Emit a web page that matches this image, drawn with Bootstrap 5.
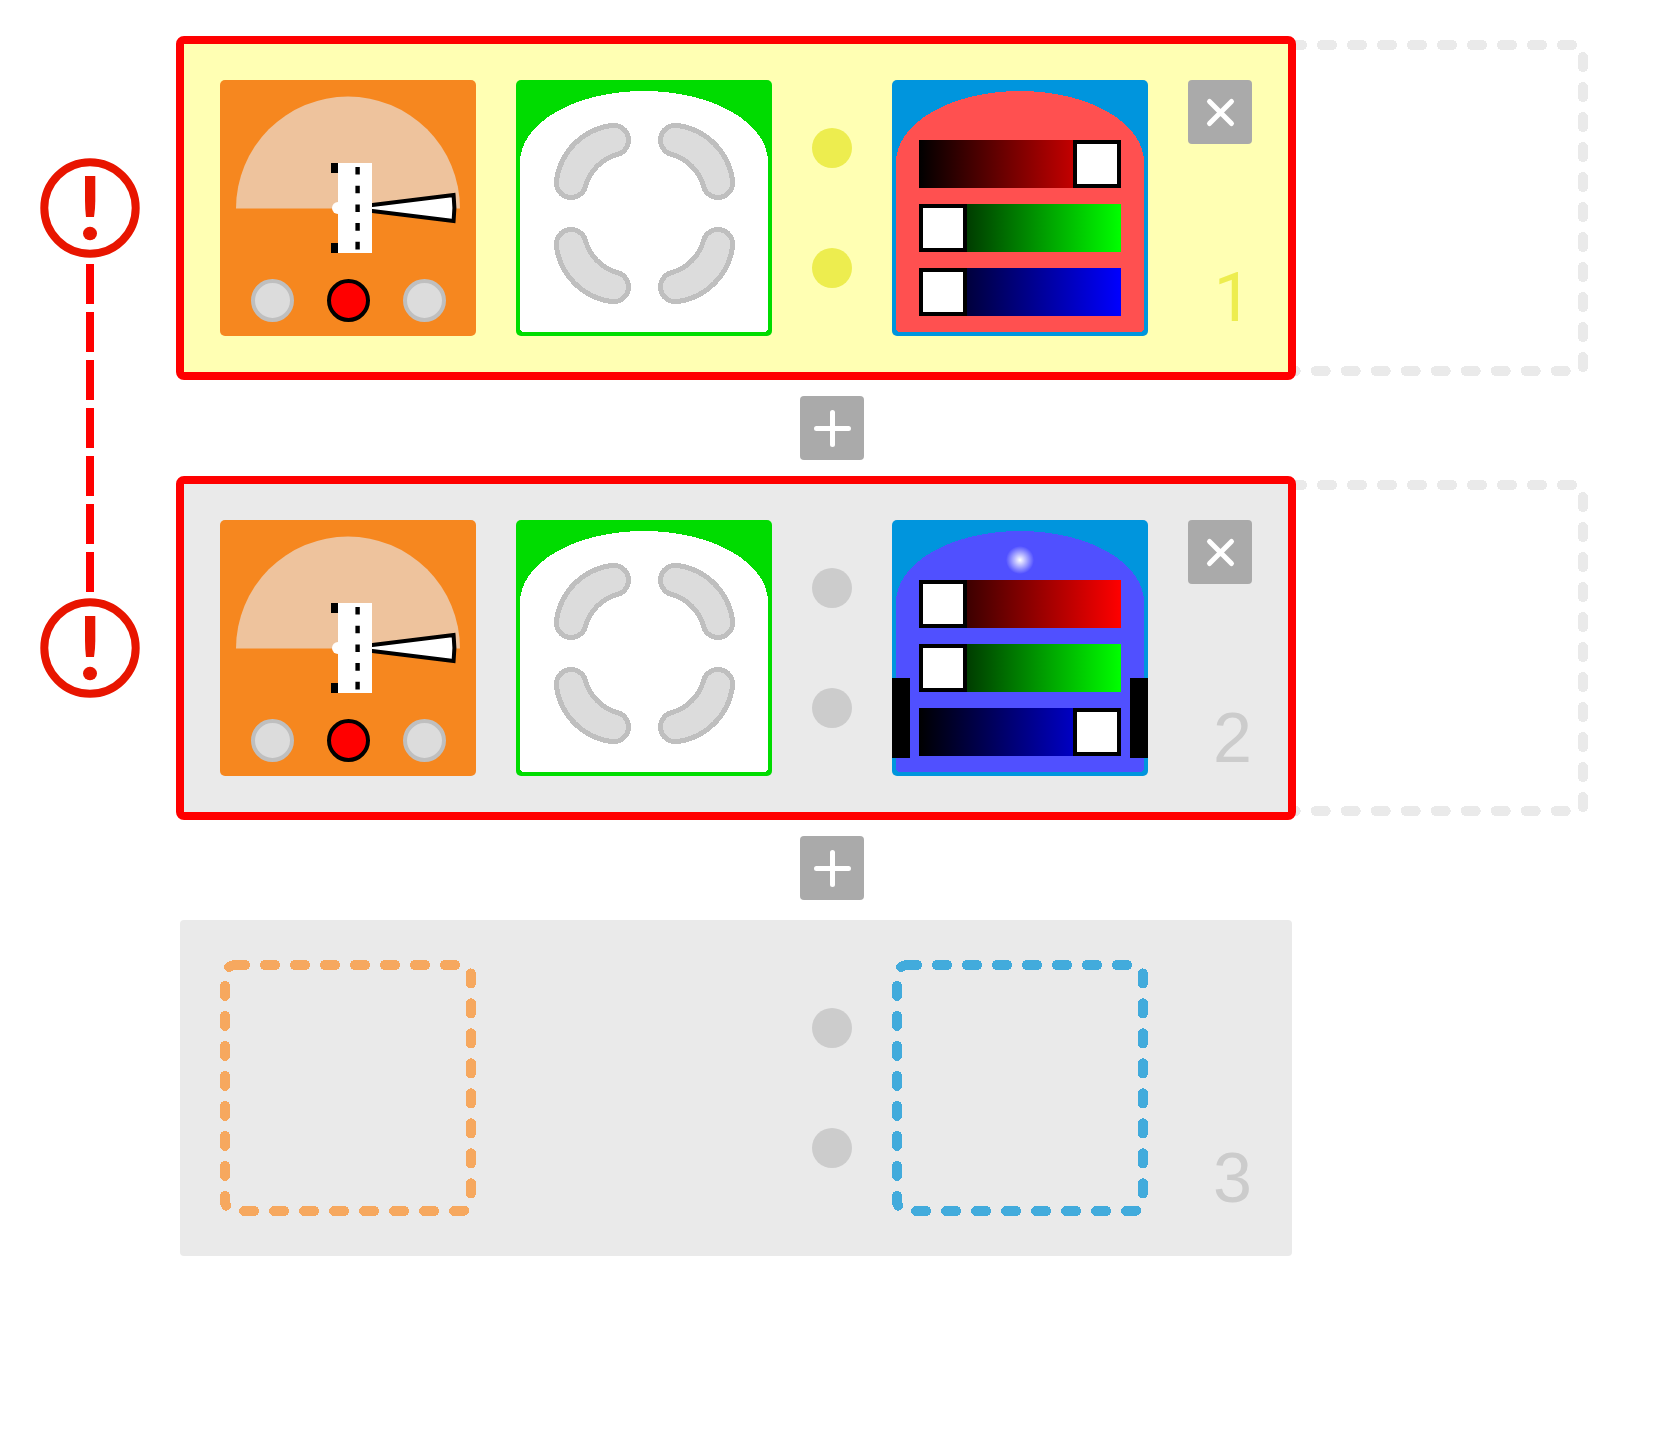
<!DOCTYPE html>
<html lang="en">
<head>
<meta charset="utf-8">
<meta name="viewport" content="width=device-width, initial-scale=1">
<title>Event-action pairs</title>
<link rel="stylesheet" href="https://cdn.jsdelivr.net/npm/bootstrap@5.3.0/dist/css/bootstrap.min.css">
<script src="https://cdn.jsdelivr.net/npm/bootstrap@5.3.0/dist/js/bootstrap.bundle.min.js"></script>
<style>
  body { background: #fff; font-family: "Liberation Sans", Arial, sans-serif; }
  svg { display: block; }
  .program { padding: 40px; gap: 40px; }
  .conflict { padding-top: 118px; gap: 6px; }
  .conflict-line {
    width: 8px; height: 328px;
    background: repeating-linear-gradient(to bottom, #f00 0 40px, transparent 40px 48px);
  }
  .rules { gap: 20px; }

  /* rules and the insert buttons between them share the same columns */
  .pair, .inserter {
    display: grid;
    grid-template-columns: 256px 256px 40px 256px 64px;
    column-gap: 40px;
    padding: 0 40px;
  }
  .pair {
    padding: 40px;
    border-radius: 4px;
    background: #eaeaea;
    color: #ccc;
    position: relative;
    z-index: 1;
  }
  .pair.active { background: #ffffb3; color: #eded4f; }
  .pair.faulty { outline: 8px solid #f00; outline-offset: -4px; }
  .colon { gap: 80px; }
  .colon span { width: 40px; height: 40px; border-radius: 50%; background: currentColor; }
  .pair-number { font-size: 70px; line-height: 76px; }
  .active .pair-number { font-family: Roboto, sans-serif; font-size: 68px; }

  .tool {
    width: 64px; height: 64px;
    border-radius: 4px;
    background: #aaa;
    stroke: #fff; stroke-width: 5; stroke-linecap: round;
  }
  .inserter .tool { grid-column: 3; justify-self: center; }

  .tile { width: 256px; height: 256px; border-radius: 5px; position: relative; overflow: hidden; }
  .tile > .face { position: absolute; inset: 0; }
  .tile > .controls { position: relative; }
  .tile-sensor { background: #f6871f; }
  .tile-button { background: #00dc00; }
  .tile-color { background: #0095dd; }

  .leds { padding: 199px 0 0 31px; gap: 33px; }
  .led { width: 43px; height: 43px; border: 4px solid #bfbfbf; border-radius: 50%; background: #dcdcdc; padding: 0; }
  .led.on { border-color: #000; background: #f00; }

  .arrows { display: grid; grid-template-columns: 77px 77px; gap: 27px; padding: 43px 0 0 38px; }
  .arrow { width: 77px; height: 77px; padding: 0; border: 0; background: none; }
  .turn-1 { transform: rotate(90deg); }
  .turn-2 { transform: rotate(180deg); }
  .turn-3 { transform: rotate(270deg); }

  .sliders { padding: 60px 27px 0; gap: 16px; }
  .slider {
    -webkit-appearance: none; appearance: none;
    display: block; width: 100%; height: 48px; margin: 0;
    background: linear-gradient(to right, #000, var(--channel));
  }
  .slider::-webkit-slider-thumb {
    -webkit-appearance: none; appearance: none;
    width: 48px; height: 48px; border: 4px solid #000; border-radius: 0; background: #fff;
  }
  .slider::-moz-range-thumb {
    box-sizing: border-box; width: 48px; height: 48px; border: 4px solid #000; border-radius: 0; background: #fff;
  }
  .channel-r { --channel: #f00; }
  .channel-g { --channel: #0f0; }
  .channel-b { --channel: #00f; }

  .drop { fill: none; stroke-width: 10; stroke-linecap: round; stroke-dasharray: 10 20; }
</style>
</head>
<body>

<svg width="0" height="0" class="position-absolute" aria-hidden="true">
  <defs>
    <radialGradient id="glow">
      <stop offset="0" stop-color="#fff"/>
      <stop offset="1" stop-color="#fff" stop-opacity="0"/>
    </radialGradient>
    <symbol id="alert" viewBox="0 0 100 100">
      <circle cx="50" cy="50" r="45.7" fill="none" stroke="#e81500" stroke-width="8"/>
      <path d="M45 18H55.3V43Q55.3 50 54 59H46Q45 50 45 43Z" fill="#e81500"/>
      <ellipse cx="50" cy="75.5" rx="7" ry="6.7" fill="#e81500"/>
    </symbol>
    <symbol id="plus" viewBox="0 0 64 64"><path d="M16.5 32.5H48.5M32.5 16.5V48.5"/></symbol>
    <symbol id="cross" viewBox="0 0 64 64"><path d="M21.5 21.5L43.5 43.5M43.5 21.5L21.5 43.5"/></symbol>
    <symbol id="dome" viewBox="0 0 256 256">
      <path d="M4 82A124 71 0 0 1 252 82V248a4 4 0 0 1-4 4H8a4 4 0 0 1-4-4Z" shape-rendering="crispEdges"/>
    </symbol>
    <symbol id="arc" viewBox="0 0 77 77">
      <path d="M58 2.4A64 64 0 0 0 2.4 58A14.8 14.8 0 0 0 31.4 63.5A46 46 0 0 1 63.5 31.4A14.8 14.8 0 0 0 58 2.4Z"
            fill="#dcdcdc" stroke="#bfbfbf" stroke-width="5" shape-rendering="crispEdges"/>
    </symbol>
    <symbol id="gauge" viewBox="0 0 256 256">
      <path d="M16 128.5A112 112 0 0 1 240 128.5Z" fill="#eec39d"/>
      <path d="M128 128L233.6 115A106 106 0 0 1 233.6 141Z" fill="#fff" stroke="#000" stroke-width="4"/>
      <circle cx="118" cy="128" r="6" fill="#fff"/>
      <path d="M118 83H152V173H118Z" fill="#fff"/>
      <path d="M111 83h7v10h-7ZM111 163h7v10h-7Z"/>
      <path d="M137.6 87V170" stroke="#000" stroke-width="4.4" stroke-dasharray="7.6 11.1"/>
    </symbol>
    <symbol id="socket" viewBox="0 0 256 256">
      <rect class="drop" x="5" y="5" width="246" height="246" rx="10" shape-rendering="crispEdges"/>
    </symbol>
    <symbol id="annex" viewBox="0 0 296 336">
      <path class="drop" d="M0 5H284A7 7 0 0 1 291 12V329A2 2 0 0 1 289 331H0" stroke="#eaeaea" shape-rendering="crispEdges"/>
    </symbol>
  </defs>
</svg>

<main class="program d-flex align-items-start">
  <aside class="conflict d-flex flex-column align-items-center" aria-label="Rules 1 and 2 conflict">
    <svg width="100" height="100"><use href="#alert"/></svg>
    <div class="conflict-line"></div>
    <svg width="100" height="100"><use href="#alert"/></svg>
  </aside>

  <div class="rules d-flex flex-column">
    <div class="d-flex">
      <section class="pair active faulty">
        <div class="tile tile-sensor">
          <svg class="face" width="256" height="256"><use href="#gauge"/></svg>
          <div class="controls leds d-flex">
            <button class="led" type="button" aria-label="Left sensor"></button>
            <button class="led on" type="button" aria-label="Centre sensor"></button>
            <button class="led" type="button" aria-label="Right sensor"></button>
          </div>
        </div>
        <div class="tile tile-button">
          <svg class="face" width="256" height="256" fill="#fff"><use href="#dome"/></svg>
          <div class="controls arrows">
            <button class="arrow" type="button" aria-label="Forward left"><svg width="77" height="77"><use href="#arc"/></svg></button>
            <button class="arrow turn-1" type="button" aria-label="Forward right"><svg width="77" height="77"><use href="#arc"/></svg></button>
            <button class="arrow turn-3" type="button" aria-label="Back left"><svg width="77" height="77"><use href="#arc"/></svg></button>
            <button class="arrow turn-2" type="button" aria-label="Back right"><svg width="77" height="77"><use href="#arc"/></svg></button>
          </div>
        </div>
        <div class="colon d-flex flex-column justify-content-center"><span></span><span></span></div>
        <div class="tile tile-color">
          <svg class="face" width="256" height="256" fill="#ff5050"><use href="#dome"/></svg>
          <div class="controls sliders d-flex flex-column">
            <input class="slider channel-r" type="range" min="0" max="32" value="32" aria-label="Red">
            <input class="slider channel-g" type="range" min="0" max="32" value="0" aria-label="Green">
            <input class="slider channel-b" type="range" min="0" max="32" value="0" aria-label="Blue">
          </div>
        </div>
        <div class="d-flex flex-column justify-content-between align-items-end">
          <button class="tool border-0 p-0" type="button" aria-label="Remove rule 1"><svg width="64" height="64"><use href="#cross"/></svg></button>
          <span class="pair-number">1</span>
        </div>
      </section>
      <svg width="296" height="336"><use href="#annex"/></svg>
    </div>

    <div class="inserter">
      <button class="tool border-0 p-0" type="button" aria-label="Insert after rule 1"><svg width="64" height="64"><use href="#plus"/></svg></button>
    </div>

    <div class="d-flex">
      <section class="pair faulty">
        <div class="tile tile-sensor">
          <svg class="face" width="256" height="256"><use href="#gauge"/></svg>
          <div class="controls leds d-flex">
            <button class="led" type="button" aria-label="Left sensor"></button>
            <button class="led on" type="button" aria-label="Centre sensor"></button>
            <button class="led" type="button" aria-label="Right sensor"></button>
          </div>
        </div>
        <div class="tile tile-button">
          <svg class="face" width="256" height="256" fill="#fff"><use href="#dome"/></svg>
          <div class="controls arrows">
            <button class="arrow" type="button" aria-label="Forward left"><svg width="77" height="77"><use href="#arc"/></svg></button>
            <button class="arrow turn-1" type="button" aria-label="Forward right"><svg width="77" height="77"><use href="#arc"/></svg></button>
            <button class="arrow turn-3" type="button" aria-label="Back left"><svg width="77" height="77"><use href="#arc"/></svg></button>
            <button class="arrow turn-2" type="button" aria-label="Back right"><svg width="77" height="77"><use href="#arc"/></svg></button>
          </div>
        </div>
        <div class="colon d-flex flex-column justify-content-center"><span></span><span></span></div>
        <div class="tile tile-color">
          <svg class="face" width="256" height="256">
            <use href="#dome" fill="#5050ff"/>
            <path d="M0 158h18v80H0ZM238 158h18v80h-18Z"/>
            <circle cx="128" cy="40" r="14" fill="url(#glow)"/>
          </svg>
          <div class="controls sliders d-flex flex-column">
            <input class="slider channel-r" type="range" min="0" max="32" value="0" aria-label="Red">
            <input class="slider channel-g" type="range" min="0" max="32" value="0" aria-label="Green">
            <input class="slider channel-b" type="range" min="0" max="32" value="32" aria-label="Blue">
          </div>
        </div>
        <div class="d-flex flex-column justify-content-between align-items-end">
          <button class="tool border-0 p-0" type="button" aria-label="Remove rule 2"><svg width="64" height="64"><use href="#cross"/></svg></button>
          <span class="pair-number">2</span>
        </div>
      </section>
      <svg width="296" height="336"><use href="#annex"/></svg>
    </div>

    <div class="inserter">
      <button class="tool border-0 p-0" type="button" aria-label="Insert after rule 2"><svg width="64" height="64"><use href="#plus"/></svg></button>
    </div>

    <div class="d-flex">
      <section class="pair">
        <svg width="256" height="256" stroke="#f6a85f"><use href="#socket"/></svg>
        <div></div>
        <div class="colon d-flex flex-column justify-content-center"><span></span><span></span></div>
        <svg width="256" height="256" stroke="#42abdc"><use href="#socket"/></svg>
        <div class="d-flex flex-column justify-content-end align-items-end">
          <span class="pair-number">3</span>
        </div>
      </section>
    </div>
  </div>
</main>

</body>
</html>
